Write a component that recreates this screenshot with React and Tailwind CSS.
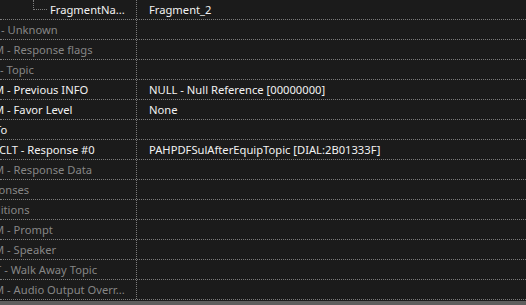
import React from "react"

const rows = [
  { label: "FragmentNa...", value: "Fragment_2", indent: 50, tree: true },
  { label: "- Unknown", dim: true, indent: 1 },
  { label: "M - Response flags", dim: true, indent: -6 },
  { label: "- Topic", dim: true, indent: 0 },
  { label: "M - Previous INFO", value: "NULL - Null Reference [00000000]", indent: -6 },
  { label: "M - Favor Level", value: "None", indent: -6 },
  { label: "To", indent: -5 },
  { label: "TCLT - Response #0", value: "PAHPDFSulAfterEquipTopic [DIAL:2B01333F]", indent: -7 },
  { label: "M - Response Data", dim: true, indent: -6 },
  { label: "Responses", dim: true, indent: -27 },
  { label: "Conditions", dim: true, indent: -27 },
  { label: "M - Prompt", dim: true, indent: -6 },
  { label: "M - Speaker", dim: true, indent: -6 },
  { label: "T - Walk Away Topic", dim: true, indent: -5 },
  { label: "M - Audio Output Overr...", dim: true, indent: -6 },
]

const Row = ({ row }) => (
  <div className="flex h-[20px] border-b border-dotted border-[#7c7c7c]">
    <div className="relative w-[137px] shrink-0 overflow-hidden border-r border-dotted border-[#7c7c7c]">
      {row.tree && (
        <div className="absolute left-[33px] top-0 h-[10px] w-[14px] border-l border-b border-dotted border-[#7c7c7c]" />
      )}
      <div
        className={`flex h-full items-center whitespace-nowrap ${row.dim ? "text-[#868686]" : "text-[#f2f2f2]"}`}
        style={{ marginLeft: row.indent }}
      >
        {row.label}
      </div>
    </div>
    <div className="flex flex-1 items-center whitespace-nowrap pl-[12px] text-[#f2f2f2]">
      {row.value}
    </div>
  </div>
)

export default function App() {
  return (
    <div className="flex h-[305px] w-[526px] flex-col overflow-hidden bg-[#1b1b1b] text-[11.2px] font-['Noto_Sans',sans-serif] leading-none">
      {rows.map((row, i) => (
        <Row key={i} row={row} />
      ))}
      <div className="h-[1px]" />
      <div className="flex-1 bg-[#5e5e5e]" />
    </div>
  )
}
